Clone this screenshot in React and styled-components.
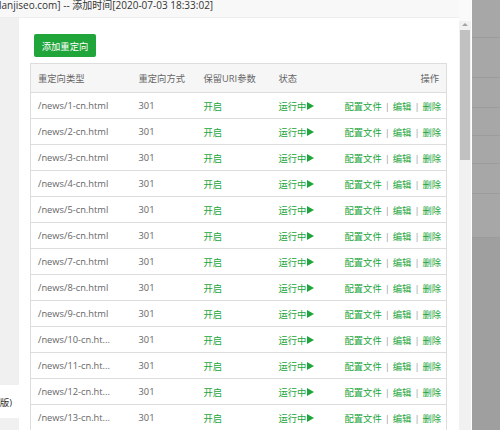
import React from "react";
import styled, { createGlobalStyle } from "styled-components";

const GlobalStyle = createGlobalStyle`
  html, body {
    margin: 0;
    padding: 0;
    background: #a4a4a4;
    overflow: hidden;
  }
  body {
    font-family: "Open Sans", "Noto Sans CJK SC", sans-serif;
    color: #666;
  }
`;

const Screen = styled.div`
  width: 500px;
  height: 430px;
  display: flex;
  overflow: hidden;
`;

const Modal = styled.div`
  width: 472px;
  height: 430px;
  display: flex;
  background: #fff;
  flex-shrink: 0;
`;

const Main = styled.div`
  flex: 1;
  display: flex;
  flex-direction: column;
  min-width: 0;
`;

const TitleBar = styled.div`
  height: 18px;
  flex-shrink: 0;
  background: #f8f8f8;
  border-bottom: 1px solid #eee;
  box-sizing: border-box;
  font-size: 10px;
  line-height: 12px;
  color: #333;
  white-space: nowrap;
  overflow: hidden;
  span {
    display: block;
    margin-top: -1px;
    margin-left: -1px;
  }
`;

const Body = styled.div`
  flex: 1;
  display: flex;
  min-height: 0;
`;

const Sidebar = styled.div`
  width: 19px;
  flex-shrink: 0;
  display: flex;
  flex-direction: column;
`;

const SideBlock = styled.div`
  height: ${(p) => p.$h}px;
  background: #f0f0f0;
  flex-shrink: 0;
`;

const SideLabel = styled.div`
  height: 33px;
  flex-shrink: 0;
  display: flex;
  align-items: center;
  justify-content: flex-end;
  padding-right: 7px;
  overflow: hidden;
  white-space: nowrap;
  font-size: 9.5px;
  color: #333;
`;

const Content = styled.div`
  flex: 1;
  padding: 16px 12px 0 11px;
  overflow: hidden;
`;

const GreenButton = styled.button`
  display: block;
  margin-left: 4px;
  width: 62px;
  height: 23px;
  padding: 0;
  border: 0;
  border-radius: 2px;
  background: #20a53a;
  color: #fff;
  font-family: inherit;
  font-size: 9.3px;
`;

const Table = styled.table`
  margin-top: 6px;
  width: 417px;
  border-collapse: collapse;
  table-layout: fixed;
  border: 1px solid #ddd;
  font-size: 9.3px;
`;

const HeadCell = styled.th`
  height: 28px;
  padding: 0 7px;
  background: #f6f6f6;
  font-weight: normal;
  color: #666;
  text-align: ${(p) => (p.$right ? "right" : "left")};
  border-bottom: 1px solid #ddd;
  white-space: nowrap;
`;

const Cell = styled.td`
  height: 25px;
  padding: 0 7px;
  border-bottom: 1px solid #ddd;
  color: ${(p) => (p.$green ? "#20a53a" : "#666")};
  text-align: ${(p) => (p.$right ? "right" : "left")};
  white-space: nowrap;
  overflow: hidden;
`;

const Running = styled.span`
  display: inline-flex;
  align-items: center;
  gap: 1px;
  color: #20a53a;
`;

const Link = styled.a`
  color: #20a53a;
  text-decoration: none;
`;

const Sep = styled.span`
  color: #999;
  margin: 0 3px;
`;

const ScrollTrack = styled.div`
  width: 12px;
  flex-shrink: 0;
  display: flex;
  flex-direction: column;
  align-items: center;
  background: #f1f1f1;
  margin-right: 1px;
`;

const ScrollTop = styled.div`
  width: 100%;
  height: 21px;
  background: #fafafa;
`;

const ScrollArrow = styled.div`
  width: 0;
  height: 0;
  margin: 2px 0 4px;
  border-left: 3px solid transparent;
  border-right: 3px solid transparent;
  border-bottom: 3px solid #a3a3a3;
`;

const ScrollThumb = styled.div`
  width: 10px;
  height: 130px;
  background: #c1c1c1;
`;

const Backdrop = styled.div`
  flex: 1;
  display: flex;
  flex-direction: column;
  background: #9f9f9f;
`;

const BackdropRow = styled.div`
  height: ${(p) => p.$h}px;
  flex-shrink: 0;
  background: #a7a7a7;
  border-bottom: 1px solid #9c9c9c;
  box-sizing: border-box;
`;

const rows = Array.from({ length: 13 }, (_, i) => {
  const n = i + 1;
  return n < 10 ? `/news/${n}-cn.html` : `/news/${n}-cn.ht...`;
});

function Triangle() {
  return (
    <svg width="7" height="8" viewBox="0 0 7 8">
      <path d="M0 0 L7 4 L0 8 Z" fill="#20a53a" />
    </svg>
  );
}

export default function App() {
  return (
    <>
      <GlobalStyle />
      <Screen>
        <Modal>
          <Main>
            <TitleBar>
              <span>lanjiseo.com] -- 添加时间[2020-07-03 18:33:02]</span>
            </TitleBar>
            <Body>
              <Sidebar>
                <SideBlock $h={367} />
                <SideLabel>(专业版)</SideLabel>
                <SideBlock $h={40} />
              </Sidebar>
              <Content>
                <GreenButton>添加重定向</GreenButton>
                <Table>
                  <colgroup>
                    <col style={{ width: 101 }} />
                    <col style={{ width: 65 }} />
                    <col style={{ width: 75 }} />
                    <col style={{ width: 66 }} />
                    <col />
                  </colgroup>
                  <thead>
                    <tr>
                      <HeadCell>重定向类型</HeadCell>
                      <HeadCell>重定向方式</HeadCell>
                      <HeadCell>保留URI参数</HeadCell>
                      <HeadCell>状态</HeadCell>
                      <HeadCell $right>操作</HeadCell>
                    </tr>
                  </thead>
                  <tbody>
                    {rows.map((path) => (
                      <tr key={path}>
                        <Cell>{path}</Cell>
                        <Cell>301</Cell>
                        <Cell $green>开启</Cell>
                        <Cell>
                          <Running>
                            运行中
                            <Triangle />
                          </Running>
                        </Cell>
                        <Cell $right>
                          <Link>配置文件</Link>
                          <Sep>|</Sep>
                          <Link>编辑</Link>
                          <Sep>|</Sep>
                          <Link>删除</Link>
                        </Cell>
                      </tr>
                    ))}
                  </tbody>
                </Table>
              </Content>
            </Body>
          </Main>
          <ScrollTrack>
            <ScrollTop />
            <ScrollArrow />
            <ScrollThumb />
          </ScrollTrack>
        </Modal>
        <Backdrop>
          <BackdropRow $h={38} />
          <BackdropRow $h={40} />
          <BackdropRow $h={30} />
          <BackdropRow $h={28} />
          <BackdropRow $h={28} />
          <BackdropRow $h={30} />
          <BackdropRow $h={44} />
        </Backdrop>
      </Screen>
    </>
  );
}
